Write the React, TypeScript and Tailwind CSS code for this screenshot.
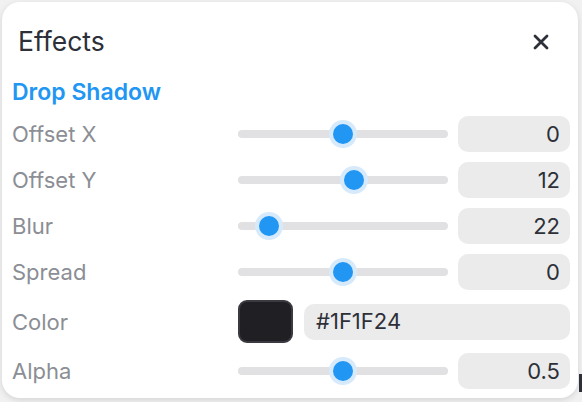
const font = { fontFamily: "Inter, 'Noto Sans', sans-serif" }

type SliderRow = { label: string; value: string; num: number; min: number; max: number }

const rows: SliderRow[] = [
  { label: "Offset X", value: "0", num: 0, min: -50, max: 50 },
  { label: "Offset Y", value: "12", num: 12, min: -100, max: 100 },
  { label: "Blur", value: "22", num: 22, min: 0, max: 200 },
  { label: "Spread", value: "0", num: 0, min: -50, max: 50 },
]

const alpha: SliderRow = { label: "Alpha", value: "0.5", num: 0.5, min: 0, max: 1 }

function Slider({ row }: { row: SliderRow }) {
  const p = (row.num - row.min) / (row.max - row.min)
  // thumb centre travels from 10px to 200px along the 210px track
  const left = 10 + p * 190 - 10
  return (
    <div className="relative w-[210px] h-[28px] flex items-center">
      <div className="w-full h-[8px] rounded-full bg-[#e1e1e3]" />
      <div
        className="absolute top-[4px] w-[20px] h-[20px] rounded-full bg-[#2196f3] shadow-[0_0_0_4px_#d6eafc]"
        style={{ left }}
      />
    </div>
  )
}

function Row({ row }: { row: SliderRow }) {
  return (
    <div className="flex items-center h-[36px]">
      <div className="w-[226px] text-[22px] text-[#8b8e94] leading-none">{row.label}</div>
      <Slider row={row} />
      <div className="ml-[10px] w-[112px] h-[36px] rounded-[10px] bg-[#ebebeb] flex items-center justify-end pr-[10px] text-[22px] text-[#2d3038]">
        {row.value}
      </div>
    </div>
  )
}

export default function App() {
  return (
    <div className="relative w-[582px] h-[402px] bg-[#f1f1f1] pt-[2px] pl-[2px] overflow-hidden" style={font}>
      <div className="w-[576px] h-[396px] rounded-[18px] bg-white shadow-[0_2px_6px_rgba(0,0,0,0.12)] pt-[23px] pl-[10px] pr-[8px] flex flex-col">
        <div className="flex items-center justify-between h-[32px]">
          <div className="pl-[6px] text-[26.5px] leading-[32px] text-[#2d3038]">Effects</div>
          <svg width="16" height="16" viewBox="0 0 16 16" className="mr-[21px] mt-[1px]">
            <path d="M2 2 L14 14 M14 2 L2 14" stroke="#2d3038" strokeWidth="2.8" strokeLinecap="round" />
          </svg>
        </div>
        <div className="mt-[21px] text-[23px] leading-[28px] font-semibold text-[#2196f3]">Drop Shadow</div>
        <div className="mt-[10px] flex flex-col gap-[10px]">
          {rows.map((r) => (
            <Row key={r.label} row={r} />
          ))}
          <div className="flex items-center h-[43px]">
            <div className="w-[226px] text-[22px] text-[#8b8e94] leading-none">Color</div>
            <div className="w-[55px] h-[43px] rounded-[9px] bg-[#1f1f24] border-2 border-[#3a3a40]" />
            <div className="ml-[11px] flex-1 h-[36px] rounded-[10px] bg-[#ebebeb] flex items-center pl-[12px] text-[22px] text-[#2d3038]">
              #1F1F24
            </div>
          </div>
          <Row row={alpha} />
        </div>
      </div>
      <div className="absolute right-0 top-[374px] w-[3px] h-[18px] bg-[#2d3038]" />
    </div>
  )
}
